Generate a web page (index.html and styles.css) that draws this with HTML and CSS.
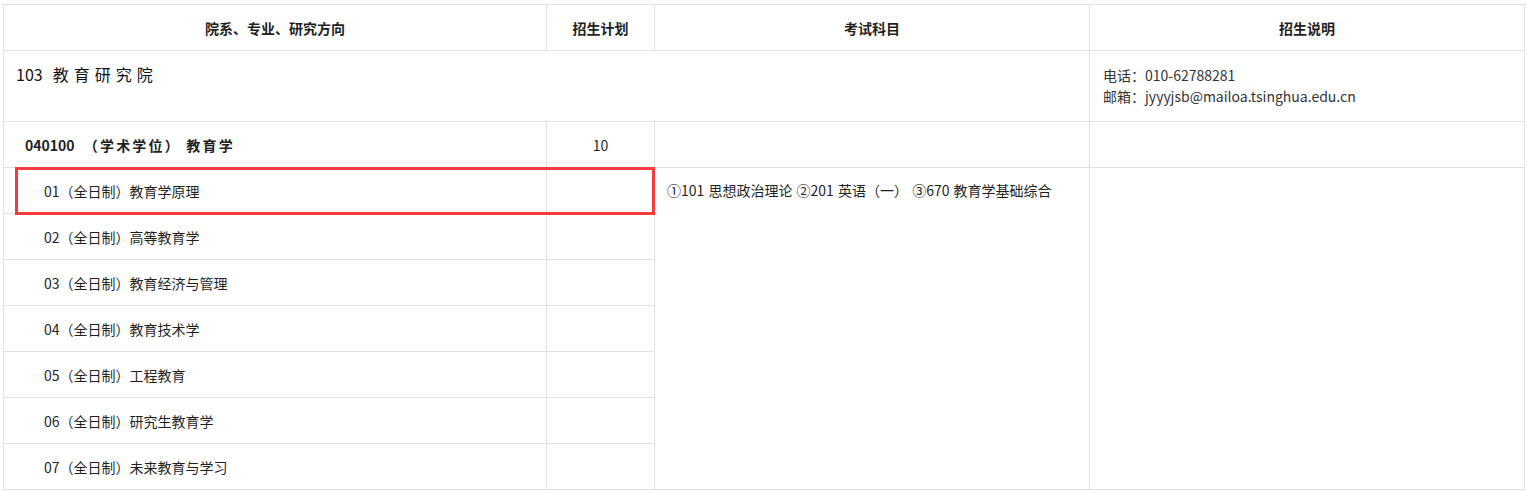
FILE: index.html
```html
<!DOCTYPE html>
<html lang="zh-CN">
<head>
  <meta charset="UTF-8" />
  <meta name="viewport" content="width=device-width, initial-scale=1.0" />
  <title>招生专业目录</title>
  <link rel="stylesheet" href="styles.css">
</head>
<body>
  <div class="wrap">
    <table class="catalog">
      <colgroup>
        <col class="c-major">
        <col class="c-plan">
        <col class="c-exam">
        <col class="c-note">
      </colgroup>
      <thead>
        <tr>
          <th>院系、专业、研究方向</th>
          <th>招生计划</th>
          <th>考试科目</th>
          <th>招生说明</th>
        </tr>
      </thead>
      <tbody>
        <tr class="dept">
          <td colspan="3" class="dept-name">103<span class="dept-cn">教育研究院</span></td>
          <td class="contact">
            电话：010-62788281<br>
            邮箱：jyyyjsb@mailoa.tsinghua.edu.cn
          </td>
        </tr>
        <tr class="major">
          <td class="major-name">040100 <span class="major-cn">（学术学位） 教育学</span></td>
          <td class="plan">10</td>
          <td></td>
          <td></td>
        </tr>
        <tr class="dir">
          <td class="dir-name">01（全日制）教育学原理</td>
          <td></td>
          <td rowspan="7" class="exam">①101 思想政治理论 ②201 英语（一） ③670 教育学基础综合</td>
          <td rowspan="7"></td>
        </tr>
        <tr class="dir">
          <td class="dir-name">02（全日制）高等教育学</td>
          <td></td>
        </tr>
        <tr class="dir">
          <td class="dir-name">03（全日制）教育经济与管理</td>
          <td></td>
        </tr>
        <tr class="dir">
          <td class="dir-name">04（全日制）教育技术学</td>
          <td></td>
        </tr>
        <tr class="dir">
          <td class="dir-name">05（全日制）工程教育</td>
          <td></td>
        </tr>
        <tr class="dir">
          <td class="dir-name">06（全日制）研究生教育学</td>
          <td></td>
        </tr>
        <tr class="dir">
          <td class="dir-name">07（全日制）未来教育与学习</td>
          <td></td>
        </tr>
      </tbody>
    </table>
    <div class="highlight"></div>
  </div>
</body>
</html>
```

FILE: styles.css
```css
body {
  margin: 0;
  background: #fff;
  color: #1f1f1f;
  font-family: "Noto Sans CJK SC", "Noto Sans", sans-serif;
  font-size: 14px;
}
.wrap {
  position: relative;
  padding: 4px 0 0 3px;
}
.catalog {
  border-collapse: collapse;
  table-layout: fixed;
  width: 1521px;
}
.c-major { width: 543px; }
.c-plan { width: 108px; }
.c-exam { width: 435px; }
.c-note { width: 435px; }
.catalog th,
.catalog td {
  border: 1px solid #dfe1e6;
  padding: 0;
  line-height: 20px;
}
.catalog th {
  height: 45px;
  font-size: 14px;
  font-weight: bold;
  color: #1f1f1f;
  text-align: center;
  vertical-align: middle;
}
.dept td {
  height: 70px;
}
.dept .dept-name {
  height: 58px;
  vertical-align: top;
  padding: 12px 0 0 12px;
  font-size: 16px;
  line-height: 22px;
  color: #111;
}
.dept-cn {
  margin-left: 10px;
  letter-spacing: 5px;
}
.dept .contact {
  padding-left: 13px;
  color: #333;
  line-height: 21px;
  vertical-align: middle;
}
.major td {
  height: 45px;
  vertical-align: middle;
}
.major .major-name {
  padding-left: 21px;
  font-weight: bold;
}
.major-cn {
  margin-left: 6px;
  letter-spacing: 2.2px;
}
.plan {
  text-align: center;
}
.dir td {
  height: 45px;
  vertical-align: middle;
}
.dir .dir-name {
  padding-left: 40px;
}
.dir .exam {
  height: auto;
  vertical-align: top;
  padding: 12px 0 0 12px;
  white-space: nowrap;
  word-spacing: 1px;
}
.highlight {
  position: absolute;
  left: 15px;
  top: 167px;
  width: 634px;
  height: 42px;
  border: 3px solid #f53b3b;
}
```
